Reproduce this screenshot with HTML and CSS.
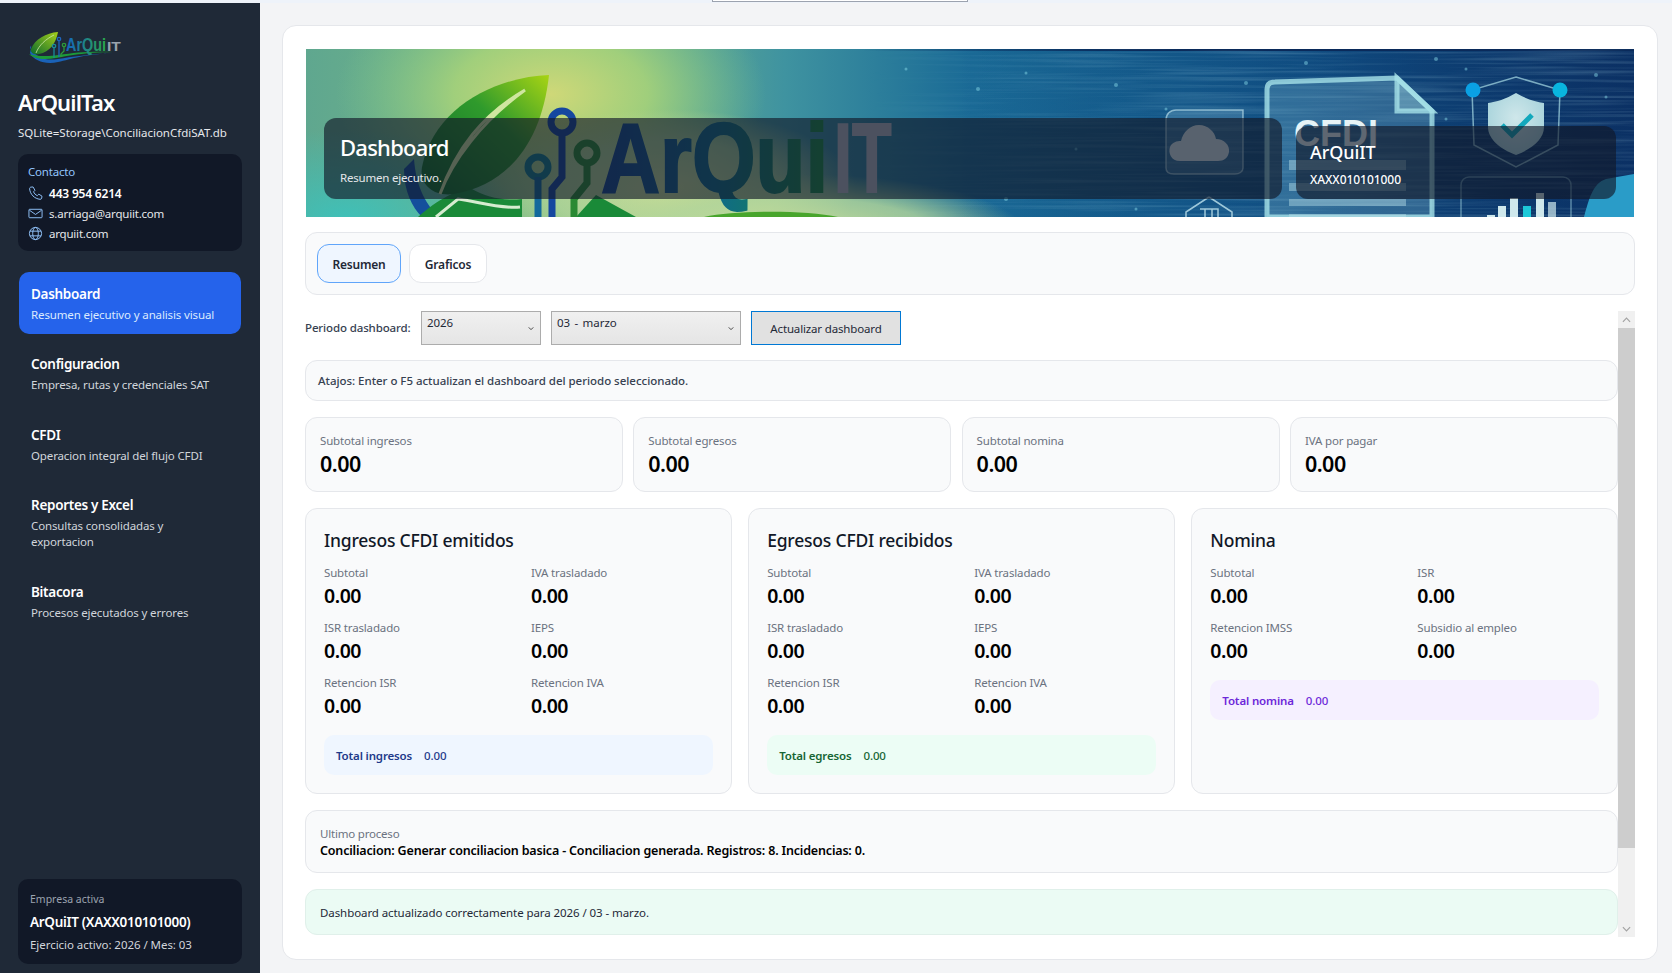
FILE: index.html
```html
<!DOCTYPE html>
<html lang="es">
<head>
<meta charset="utf-8">
<title>ArQuilTax</title>
<link rel="stylesheet" href="styles.css">
</head>
<body>
<div class="top-strip"></div>
<div class="popup-edge"></div>
<div class="app">
  <aside class="side">
    <svg class="logo" viewBox="0 0 94 36" width="94" height="36">
      <defs>
        <linearGradient id="lg1" x1="0" y1="1" x2="1" y2="0"><stop offset="0" stop-color="#0d6b2d"/><stop offset="1" stop-color="#a6d01a"/></linearGradient>
        <linearGradient id="lg2" x1="0" y1="0" x2="1" y2="0"><stop offset="0" stop-color="#1565c0"/><stop offset="1" stop-color="#2aa84a"/></linearGradient>
      </defs>
      <path d="M2 18C4 12 3 20 2 23C6 31 18 35 30 32C44 29 56 24 88 23C60 24 44 27 30 29C18 31 9 28 2 18Z" fill="#1a62b8"/>
      <path d="M1 24C6 26 20 27 30 25C50 22 62 21 90 22C60 22 44 25 28 28C16 30 6 29 1 24Z" fill="#1c9a3a"/>
      <path d="M30 2C18 3 7 9 3 19C2 23 6 25 11 24C22 22 28 13 30 2Z" fill="url(#lg1)"/>
      <path d="M26 5C18 9 11 15 8 23" fill="none" stroke="#cfe9a8" stroke-width=".8"/>
      <g fill="none" stroke-width="1.3">
        <circle cx="31" cy="9" r="1.7" stroke="#1e66c0"/><path d="M31 11V27" stroke="#1e66c0"/>
        <circle cx="26" cy="16" r="1.7" stroke="#1a8a9a"/><path d="M26 18V28" stroke="#1a8a9a"/>
        <circle cx="36" cy="15" r="1.7" stroke="#2c9a3a"/><path d="M36 17V21L33 24V27" stroke="#2c9a3a"/>
      </g>
      <text transform="translate(38 21) scale(.8 1)" class="logo-t1">ArQui</text>
      <text transform="translate(79 21) scale(1.3 1)" class="logo-t2">IT</text>
    </svg>
    <h1 class="brand">ArQuilTax</h1>
    <p class="dbpath">SQLite=Storage\ConciliacionCfdiSAT.db</p>

    <div class="contact">
      <div class="contact-h">Contacto</div>
      <div class="contact-r strong">
        <svg viewBox="0 0 16 16" width="15" height="15" class="ci"><path d="M3.2 1.2L5.4 1l2 3.6-1.5 1.6c.7 1.7 2.2 3.3 4 4.1l1.6-1.6 3.4 2.1-.3 2.2c-.2.8-.9 1.3-1.7 1.2C7 13.600 2.300 9 1.700 3c-.1-.9.6-1.700 1.500-1.800z"/></svg>
        <span>443 954 6214</span>
      </div>
      <div class="contact-r">
        <svg viewBox="0 0 16 16" width="15" height="15" class="ci"><rect x="1" y="3.500" width="14" height="9" rx=".8"/><path d="M1.500 4.500L8 9l6.500-4.500"/></svg>
        <span>s.arriaga@arquiit.com</span>
      </div>
      <div class="contact-r">
        <svg viewBox="0 0 16 16" width="15" height="15" class="ci"><circle cx="8" cy="8" r="6.500"/><ellipse cx="8" cy="8" rx="3" ry="6.500"/><path d="M2 5.500h12M2 10.500h12"/></svg>
        <span>arquiit.com</span>
      </div>
    </div>

    <nav class="nav">
      <a class="nav-i active"><b>Dashboard</b><span>Resumen ejecutivo y analisis visual</span></a>
      <a class="nav-i"><b>Configuracion</b><span>Empresa, rutas y credenciales SAT</span></a>
      <a class="nav-i"><b>CFDI</b><span>Operacion integral del flujo CFDI</span></a>
      <a class="nav-i"><b>Reportes y Excel</b><span>Consultas consolidadas y<br>exportacion</span></a>
      <a class="nav-i"><b>Bitacora</b><span>Procesos ejecutados y errores</span></a>
    </nav>

    <div class="active-co">
      <div class="ac-l">Empresa activa</div>
      <div class="ac-n">ArQuiIT (XAXX010101000)</div>
      <div class="ac-e">Ejercicio activo: 2026 / Mes: 03</div>
    </div>
  </aside>

  <main class="main">
    <section class="card">
      <header class="banner">
        <svg class="banner-art" viewBox="0 0 1328 168" preserveAspectRatio="none">
          <defs>
            <linearGradient id="bgB" x1="0" y1="0" x2="1" y2="0">
              <stop offset="0" stop-color="#5fa78f"/><stop offset=".2" stop-color="#7cba84"/><stop offset=".36" stop-color="#3f93a0"/><stop offset=".5" stop-color="#1a6a96"/><stop offset=".75" stop-color="#125a90"/><stop offset="1" stop-color="#0c3870"/>
            </linearGradient>
            <radialGradient id="glow" cx=".5" cy=".5" r=".5">
              <stop offset="0" stop-color="#cfd878"/><stop offset=".45" stop-color="#a6d27a" stop-opacity=".9"/><stop offset="1" stop-color="#7fc98a" stop-opacity="0"/>
            </radialGradient>
            <radialGradient id="glow2" cx=".5" cy=".5" r=".5">
              <stop offset="0" stop-color="#3fc0b8"/><stop offset="1" stop-color="#3fc0b8" stop-opacity="0"/>
            </radialGradient>
            <radialGradient id="glow3" cx=".5" cy=".5" r=".5">
              <stop offset="0" stop-color="#c8dc98"/><stop offset=".6" stop-color="#b4d69a" stop-opacity=".8"/><stop offset="1" stop-color="#bcd890" stop-opacity="0"/>
            </radialGradient>
            <linearGradient id="leaf" x1="0" y1="1" x2="1" y2="0"><stop offset="0" stop-color="#0f6a2c"/><stop offset=".6" stop-color="#2f9a2c"/><stop offset="1" stop-color="#a8d414"/></linearGradient>
            <linearGradient id="txtBlue" x1="0" y1="0" x2="1" y2="0"><stop offset="0" stop-color="#14458f"/><stop offset=".5" stop-color="#0f6a88"/><stop offset="1" stop-color="#1a8a40"/></linearGradient>
            <linearGradient id="topDark" x1="0" y1="0" x2="1" y2="0"><stop offset="0" stop-color="#0a2a5a" stop-opacity="0"/><stop offset="1" stop-color="#0a2a5a" stop-opacity=".55"/></linearGradient>
            <linearGradient id="fade" x1="0" y1="0" x2="1" y2="0"><stop offset=".42" stop-color="#000"/><stop offset=".62" stop-color="#fff"/></linearGradient>
            <mask id="fadeL"><rect width="1328" height="168" fill="url(#fade)"/></mask>
            <radialGradient id="shieldG" cx=".5" cy=".4" r=".7"><stop offset="0" stop-color="#cfe7ea"/><stop offset="1" stop-color="#9fcfd8"/></radialGradient>
            <filter id="streak" x="0" y="0" width="100%" height="100%"><feTurbulence type="fractalNoise" baseFrequency=".006 .32" numOctaves="2" seed="4"/><feColorMatrix values="0 0 0 0 .55  0 0 0 0 .88  0 0 0 0 .96  0 0 0 .4 -.17"/></filter>
          </defs>
          <rect width="1328" height="168" fill="url(#bgB)"/>
          <ellipse cx="245" cy="45" rx="215" ry="125" fill="url(#glow)"/>
          <ellipse cx="360" cy="140" rx="190" ry="80" fill="url(#glow3)"/>
          <ellipse cx="40" cy="170" rx="170" ry="90" fill="url(#glow2)"/>
          <ellipse cx="490" cy="185" rx="230" ry="60" fill="url(#glow3)"/>
          <rect x="650" width="678" height="168" fill="url(#topDark)"/>
          <rect width="1328" height="2" fill="#0a2a5a" mask="url(#fadeL)"/>
          <rect width="1328" height="168" filter="url(#streak)" mask="url(#fadeL)"/>
          <g fill="#8fe0ee" fill-opacity=".45">
            <circle cx="600" cy="20" r="1.500"/><circle cx="672" cy="40" r="2"/><circle cx="720" cy="24" r="1.500"/><circle cx="810" cy="36" r="2"/><circle cx="860" cy="60" r="1.500"/><circle cx="940" cy="34" r="2"/><circle cx="1000" cy="14" r="2"/><circle cx="1130" cy="10" r="2"/><circle cx="1160" cy="20" r="1.500"/><circle cx="1290" cy="26" r="2"/><circle cx="1300" cy="48" r="1.500"/><circle cx="1140" cy="70" r="1.500"/><circle cx="700" cy="150" r="2"/><circle cx="770" cy="100" r="1.500"/><circle cx="830" cy="160" r="1.500"/><circle cx="1290" cy="150" r="1.500"/>
          </g>
          <path d="M398 168C430 161 500 161 532 168Z" fill="#48a52c"/>

          <path d="M98 120C98 142 106 158 116 168H132C118 152 110 136 108 110Z" fill="#144f9c"/>
          <path d="M112 168C132 150 152 140 166 140C180 148 196 152 216 150L216 168Z" fill="#1a8a38"/>
          <path d="M130 168L152 150C170 152 192 160 214 158" fill="none" stroke="#d6ecd0" stroke-width="3"/>
          <path d="M290 146L330 168H270Z" fill="#1a8a38"/>
          <path d="M243 26C190 28 128 58 116 118C113 136 128 148 148 145C205 135 236 90 243 26Z" fill="url(#leaf)"/>
          <path d="M219 41C176 66 150 100 134 145C146 112 176 72 219 41Z" fill="none" stroke="#cfe6a0" stroke-width="3"/>

          <g fill="none" stroke-width="7">
            <circle cx="256" cy="73" r="11" stroke="#15479f"/>
            <path d="M256 84V128L246 140V168" stroke="#15479f"/>
            <circle cx="232" cy="118" r="10" stroke="#127a8c"/>
            <path d="M232 128V168" stroke="#126a9c"/>
            <circle cx="281" cy="104" r="10" stroke="#2a8a34"/>
            <path d="M281 114V134L268 150V168" stroke="#2a8a34"/>
          </g>
          <text transform="translate(295 143) scale(.835 1)" class="b-t1">ArQui</text>
          <text transform="translate(528 143) scale(.66 1)" class="b-t2">IT</text>

          <path d="M860 71C860 65 864 61 870 61L937 61V119C937 123 933 125 929 125H868C863 125 860 123 860 119Z" fill="#a9d6e6" fill-opacity=".22" stroke="#bfe4ee" stroke-opacity=".65" stroke-width="1.500"/>
          <path d="M874 112C865 112 862 104 864 98C866 93 871 92 875 92C877 83 884 76 893 76C902 76 909 83 910 90C918 90 924 96 923 103C922 109 918 112 912 112Z" fill="#d4e6ea"/>
          <path d="M903 148L880 163V168M903 148L926 163V168M894 160H912V168M899 160V168M906 160V168" fill="none" stroke="#bfe4ee" stroke-opacity=".8" stroke-width="1.500"/>

          <path d="M961 40C961 35 964 33 969 33L1091 29L1126 62V168H961Z" fill="#7fb9d0" fill-opacity=".3" stroke="#a6e2e8" stroke-opacity=".8" stroke-width="5"/>
          <path d="M1091 29V62H1126Z" fill="#a8dfe4" fill-opacity=".35" stroke="#a6e2e8" stroke-opacity=".8" stroke-width="5"/>
          <text x="988" y="97" class="b-cfdi">CFDI</text>
          <g fill="#b9e0e8" fill-opacity=".45"><rect x="983" y="111" width="117" height="10"/><rect x="983" y="134" width="117" height="8"/><rect x="983" y="150" width="117" height="7"/><rect x="983" y="165" width="117" height="3"/></g>

          <path d="M1210 28L1254 41L1252 96L1210 118L1168 96L1166 41Z" fill="none" stroke="#a8dce6" stroke-opacity=".7" stroke-width="1.500"/>
          <circle cx="1167" cy="41" r="7.500" fill="#0aa0e4"/><circle cx="1254" cy="41" r="7.500" fill="#09b5df"/>
          <path d="M1210 44C1220 50 1230 53 1238 54V78C1238 90 1226 100 1210 106C1194 100 1182 90 1182 78V54C1190 53 1200 50 1210 44Z" fill="url(#shieldG)"/>
          <path d="M1196 76L1206 86L1226 66" fill="none" stroke="#12a8bc" stroke-width="5"/>
          <rect x="1155" y="128" width="110" height="60" rx="8" fill="none" stroke="#a8dce6" stroke-opacity=".5" stroke-width="1.500"/>
          <g fill="#cfe8ec"><rect x="1181" y="166" width="8" height="2"/><rect x="1192" y="157" width="8" height="11"/><rect x="1204" y="149" width="8" height="19"/><rect x="1230" y="144" width="8" height="24"/><rect x="1242" y="153" width="8" height="15" fill-opacity=".7"/></g>
          <rect x="1217" y="157" width="8" height="11" fill="#1cc8d8"/>
          <path d="M1278 168C1283 150 1287 134 1300 130L1328 125V168Z" fill="#2a9cc8"/>
        </svg>
        <div class="b-panel b-left">
          <div class="b-title">Dashboard</div>
          <div class="b-sub">Resumen ejecutivo.</div>
        </div>
        <div class="b-panel b-right">
          <div class="b-co">ArQuiIT</div>
          <div class="b-rfc">XAXX010101000</div>
        </div>
      </header>

      <div class="tabs">
        <button class="tab on">Resumen</button>
        <button class="tab">Graficos</button>
      </div>

      <div class="scroller">
        <div class="stack">
          <div class="period">
            <label class="p-label">Periodo dashboard:</label>
            <div class="sel sel-y"><span>2026</span><svg viewBox="0 0 8 6" width="6" height="5" class="chev"><path d="M1 1.500L4 4.500L7 1.500"/></svg></div>
            <div class="sel sel-m"><span>03 - marzo</span><svg viewBox="0 0 8 6" width="6" height="5" class="chev"><path d="M1 1.500L4 4.500L7 1.500"/></svg></div>
            <button class="refresh">Actualizar dashboard</button>
          </div>

          <div class="hint">Atajos: Enter o F5 actualizan el dashboard del periodo seleccionado.</div>

          <div class="kpis">
            <div class="kpi"><span>Subtotal ingresos</span><strong>0.00</strong></div>
            <div class="kpi"><span>Subtotal egresos</span><strong>0.00</strong></div>
            <div class="kpi"><span>Subtotal nomina</span><strong>0.00</strong></div>
            <div class="kpi"><span>IVA por pagar</span><strong>0.00</strong></div>
          </div>

          <div class="panels">
            <article class="panel">
              <h2>Ingresos CFDI emitidos</h2>
              <div class="metrics">
                <div class="m"><span>Subtotal</span><strong>0.00</strong></div>
                <div class="m"><span>IVA trasladado</span><strong>0.00</strong></div>
                <div class="m"><span>ISR trasladado</span><strong>0.00</strong></div>
                <div class="m"><span>IEPS</span><strong>0.00</strong></div>
                <div class="m"><span>Retencion ISR</span><strong>0.00</strong></div>
                <div class="m"><span>Retencion IVA</span><strong>0.00</strong></div>
              </div>
              <div class="total t-blue"><b>Total ingresos</b><span>0.00</span></div>
            </article>
            <article class="panel">
              <h2>Egresos CFDI recibidos</h2>
              <div class="metrics">
                <div class="m"><span>Subtotal</span><strong>0.00</strong></div>
                <div class="m"><span>IVA trasladado</span><strong>0.00</strong></div>
                <div class="m"><span>ISR trasladado</span><strong>0.00</strong></div>
                <div class="m"><span>IEPS</span><strong>0.00</strong></div>
                <div class="m"><span>Retencion ISR</span><strong>0.00</strong></div>
                <div class="m"><span>Retencion IVA</span><strong>0.00</strong></div>
              </div>
              <div class="total t-green"><b>Total egresos</b><span>0.00</span></div>
            </article>
            <article class="panel">
              <h2>Nomina</h2>
              <div class="metrics">
                <div class="m"><span>Subtotal</span><strong>0.00</strong></div>
                <div class="m"><span>ISR</span><strong>0.00</strong></div>
                <div class="m"><span>Retencion IMSS</span><strong>0.00</strong></div>
                <div class="m"><span>Subsidio al empleo</span><strong>0.00</strong></div>
              </div>
              <div class="total t-purple"><b>Total nomina</b><span>0.00</span></div>
            </article>
          </div>

          <div class="last">
            <span>Ultimo proceso</span>
            <strong>Conciliacion: Generar conciliacion basica - Conciliacion generada. Registros: 8. Incidencias: 0.</strong>
          </div>

          <div class="ok">Dashboard actualizado correctamente para 2026 / 03 - marzo.</div>
        </div>

        <div class="sbar">
          <div class="sbtn"><svg viewBox="0 0 10 6" width="9" height="6" class="sb-ch"><path d="M1 5L5 1L9 5"/></svg></div>
          <div class="thumb"></div>
          <div class="strack"></div>
          <div class="sbtn"><svg viewBox="0 0 10 6" width="9" height="6" class="sb-ch"><path d="M1 1L5 5L9 1"/></svg></div>
        </div>
      </div>
    </section>
  </main>
</div>
</body>
</html>
```

FILE: styles.css
```css
* { box-sizing: border-box; }
html, body { margin: 0; padding: 0; height: 973px; overflow: hidden; }
body { font-family: "Noto Sans", "Open Sans", sans-serif; font-size: 12px; background: #f3f4f6; color: #111827; position: relative; }
.top-strip { height: 3px; background: #eef3fa; }
.popup-edge { position: absolute; left: 712px; top: 0; width: 256px; height: 2px; background: #fff; border: 1px solid #9ca3af; border-top: 0; }
.app { display: flex; height: 970px; }

/* sidebar */
.side { width: 260px; flex: none; background: #1f2937; padding: 27px 18px 9px; display: flex; flex-direction: column; color: #fff; }
.logo { display: block; margin-left: 10px; flex: none; }
.logo-t1 { font: 700 18px "Liberation Sans", sans-serif; fill: url(#lg2); }
.logo-t2 { font: 700 12px "Liberation Sans", sans-serif; fill: #9aa3ad; }
.brand { margin: 22px 0 0; font-size: 22px; line-height: 30px; font-weight: 600; letter-spacing: -.85px; position: relative; top: -1px; }
.dbpath { margin: 7px 0 0; font-size: 11.5px; line-height: 16px; color: #e5e7eb; letter-spacing: -.02px; white-space: nowrap; }
.contact { margin-top: 13px; height: 97px; background: #111827; border-radius: 10px; padding: 10px 10px 7px; }
.contact-h { font-size: 11.5px; line-height: 16px; color: #93c5fd; margin-bottom: 3px; letter-spacing: -.2px; }
.contact-r { display: flex; align-items: center; gap: 6px; height: 20px; font-size: 11.5px; color: #e5e7eb; letter-spacing: -.2px; }
.contact-r.strong { color: #fff; font-weight: 600; font-size: 12px; }
.ci { fill: none; stroke: #93c5fd; stroke-width: 1; flex: none; }

.nav { margin-top: 21px; display: flex; flex-direction: column; gap: 8.400px; }
.nav-i { display: block; margin: 0 1px; padding: 12px 12px 11px; border-radius: 10px; }
.nav-i b { display: block; font-size: 13.5px; line-height: 20px; font-weight: 600; letter-spacing: -.3px; }
.nav-i span { display: block; margin-top: 3px; font-size: 11.5px; line-height: 16px; color: #d1d5db; letter-spacing: -.13px; }
.nav-i.active { background: #2563eb; }
.nav-i.active span { color: #dbeafe; }

.active-co { margin-top: auto; height: 85px; background: #111827; border-radius: 10px; padding: 12px 12px 11px; }
.ac-l { font-size: 10.5px; line-height: 16px; color: #9ca3af; }
.ac-n { margin-top: 5px; font-size: 13.5px; line-height: 20px; font-weight: 600; letter-spacing: -.3px; }
.ac-e { margin-top: 5px; font-size: 11.5px; line-height: 16px; color: #d1d5db; letter-spacing: -.05px; }

/* main */
.main { flex: 1; padding: 22px 14px 13px 22px; min-width: 0; }
.card { height: 935px; background: #fff; border: 1px solid #e5e7eb; border-radius: 14px; padding: 23px 22px 21px 22px; display: flex; flex-direction: column; }

.banner { position: relative; flex: none; height: 168px; margin: 0 1px; display: flex; align-items: flex-end; gap: 14px; padding: 0 18px 18px 18px; overflow: hidden; }
.banner-art { position: absolute; inset: 0; width: 100%; height: 100%; }
.b-t1 { font: 700 98px "Liberation Sans", sans-serif; fill: url(#txtBlue); stroke: url(#txtBlue); stroke-width: 2; }
.b-t2 { font: 700 98px "Liberation Sans", sans-serif; fill: #b4b8c2; stroke: #b4b8c2; stroke-width: 2; }
.b-cfdi { font: 700 36px "Liberation Sans", sans-serif; fill: #e6f3f6; }
.b-panel { position: relative; background: rgba(17, 24, 39, .64); border-radius: 12px; color: #fff; }
.b-left { flex: 1; height: 81px; padding: 15px 16px; }
.b-right { flex: none; width: 320px; height: 73px; padding: 14px 14px; }
.b-title { font-size: 22px; line-height: 28px; font-weight: 500; letter-spacing: -.75px; }
.b-sub { margin-top: 9px; font-size: 11.5px; line-height: 16px; color: #e5e7eb; letter-spacing: -.2px; }
.b-co { font-size: 18px; line-height: 24px; font-weight: 500; letter-spacing: -.1px; }
.b-rfc { margin-top: 8px; font-size: 12px; line-height: 16px; font-weight: 500; letter-spacing: -.05px; }

.tabs { flex: none; margin-top: 15px; height: 63px; background: #f9fafb; border: 1px solid #e5e7eb; border-radius: 12px; padding: 11px; display: flex; gap: 8px; }
.tab { font: 600 12px "Noto Sans", sans-serif; letter-spacing: -.2px; height: 39px; width: 78px; background: #fff; color: #1f2937; border: 1px solid #e5e7eb; border-radius: 12px; padding: 2px 0 0; }
.tab.on { width: 84px; background: #eff6ff; border-color: #60a5fa; }

.scroller { flex: none; margin-top: 16px; height: 626px; display: flex; }
.stack { width: 1313px; flex: none; display: flex; flex-direction: column; gap: 16px; }

.period { height: 34px; flex: none; margin-bottom: -1px; display: flex; align-items: center; gap: 10px; }
.p-label { width: 106px; padding-bottom: 2px; font-weight: 500; color: #374151; white-space: nowrap; letter-spacing: -.13px; font-size: 11.5px; }
.sel { position: relative; height: 34px; background: linear-gradient(#f0f0f0, #e5e5e5); border: 1px solid #acacac; padding: 3px 5px; line-height: 16px; font-size: 11.5px; letter-spacing: -.05px; word-spacing: 1.5px; color: #1f2937; }
.sel-y { width: 120px; }
.sel-m { width: 190px; }
.chev { position: absolute; right: 6px; top: 14px; fill: none; stroke: #333; stroke-width: 1.200; }
.refresh { width: 150px; height: 34px; background: #e1e1e1; border: 1px solid #0078d4; font: 400 11.5px "Noto Sans", sans-serif; letter-spacing: -.15px; color: #1f2937; padding: 0; }

.hint { flex: none; height: 41px; background: #f9fafb; border: 1px solid #e5e7eb; border-radius: 12px; padding: 0 12px; display: flex; align-items: center; font-size: 11.5px; font-weight: 500; color: #374151; letter-spacing: -.03px; }

.kpis { flex: none; display: grid; grid-template-columns: 318px 318px 318px 1fr; column-gap: 10.300px; height: 75px; }
.kpi { background: #f9fafb; border: 1px solid #e5e7eb; border-radius: 12px; padding: 15px 14px 0; }
.kpi span, .m span { display: block; font-size: 11.5px; line-height: 16px; color: #6b7280; letter-spacing: -.15px; }
.kpi strong { display: block; margin-top: 1px; font-size: 21.5px; line-height: 28px; font-weight: 600; color: #000; letter-spacing: -.5px; }

.panels { flex: none; height: 286px; display: grid; grid-template-columns: repeat(3, 1fr); column-gap: 16.500px; }
.panel { background: #f9fafb; border: 1px solid #e5e7eb; border-radius: 12px; padding: 18px 18px 0; display: flex; flex-direction: column; }
.panel h2 { margin: 0; font-size: 17.5px; line-height: 26px; font-weight: 500; letter-spacing: -.2px; color: #111827; }
.metrics { margin-top: 12px; display: grid; grid-template-columns: 207px 1fr; row-gap: 7px; }
.m strong { display: block; font-size: 19.5px; line-height: 28px; font-weight: 600; color: #000; letter-spacing: -.45px; margin-top: 1px; height: 31px; }
.total { margin-top: 12px; height: 40px; border-radius: 10px; padding: 0 12px; display: flex; align-items: center; gap: 12px; font-size: 11.5px; letter-spacing: -.15px; font-weight: 500; }
.total b { font-weight: 600; }
.t-blue { background: #eff6ff; color: #1e3a8a; }
.t-green { background: #ecfdf5; color: #166534; }
.t-purple { background: #f5f0ff; color: #6d28d9; }

.last { flex: none; height: 63px; background: #f9fafb; border: 1px solid #e5e7eb; border-radius: 12px; padding: 15px 14px 0; }
.last span { display: block; font-size: 11.5px; line-height: 16px; color: #6b7280; letter-spacing: -.2px; }
.last strong { display: block; font-size: 12.5px; line-height: 18px; font-weight: 600; color: #000; letter-spacing: -.175px; }

.ok { flex: none; height: 46px; background: #ebfbf4; border: 1px solid #e0f0ea; border-radius: 12px; padding: 0 14px; display: flex; align-items: center; font-size: 11.5px; color: #1f2937; letter-spacing: -.08px; }

.sbar { width: 17px; flex: none; height: 626px; display: flex; flex-direction: column; background: #f0f0f0; }
.sbtn { height: 17px; flex: none; display: flex; align-items: center; justify-content: center; }
.sb-ch { fill: none; stroke: #a3a3a3; stroke-width: 1.300; }
.thumb { height: 520px; flex: none; background: #cdcdcd; }
.strack { flex: 1; }
```
